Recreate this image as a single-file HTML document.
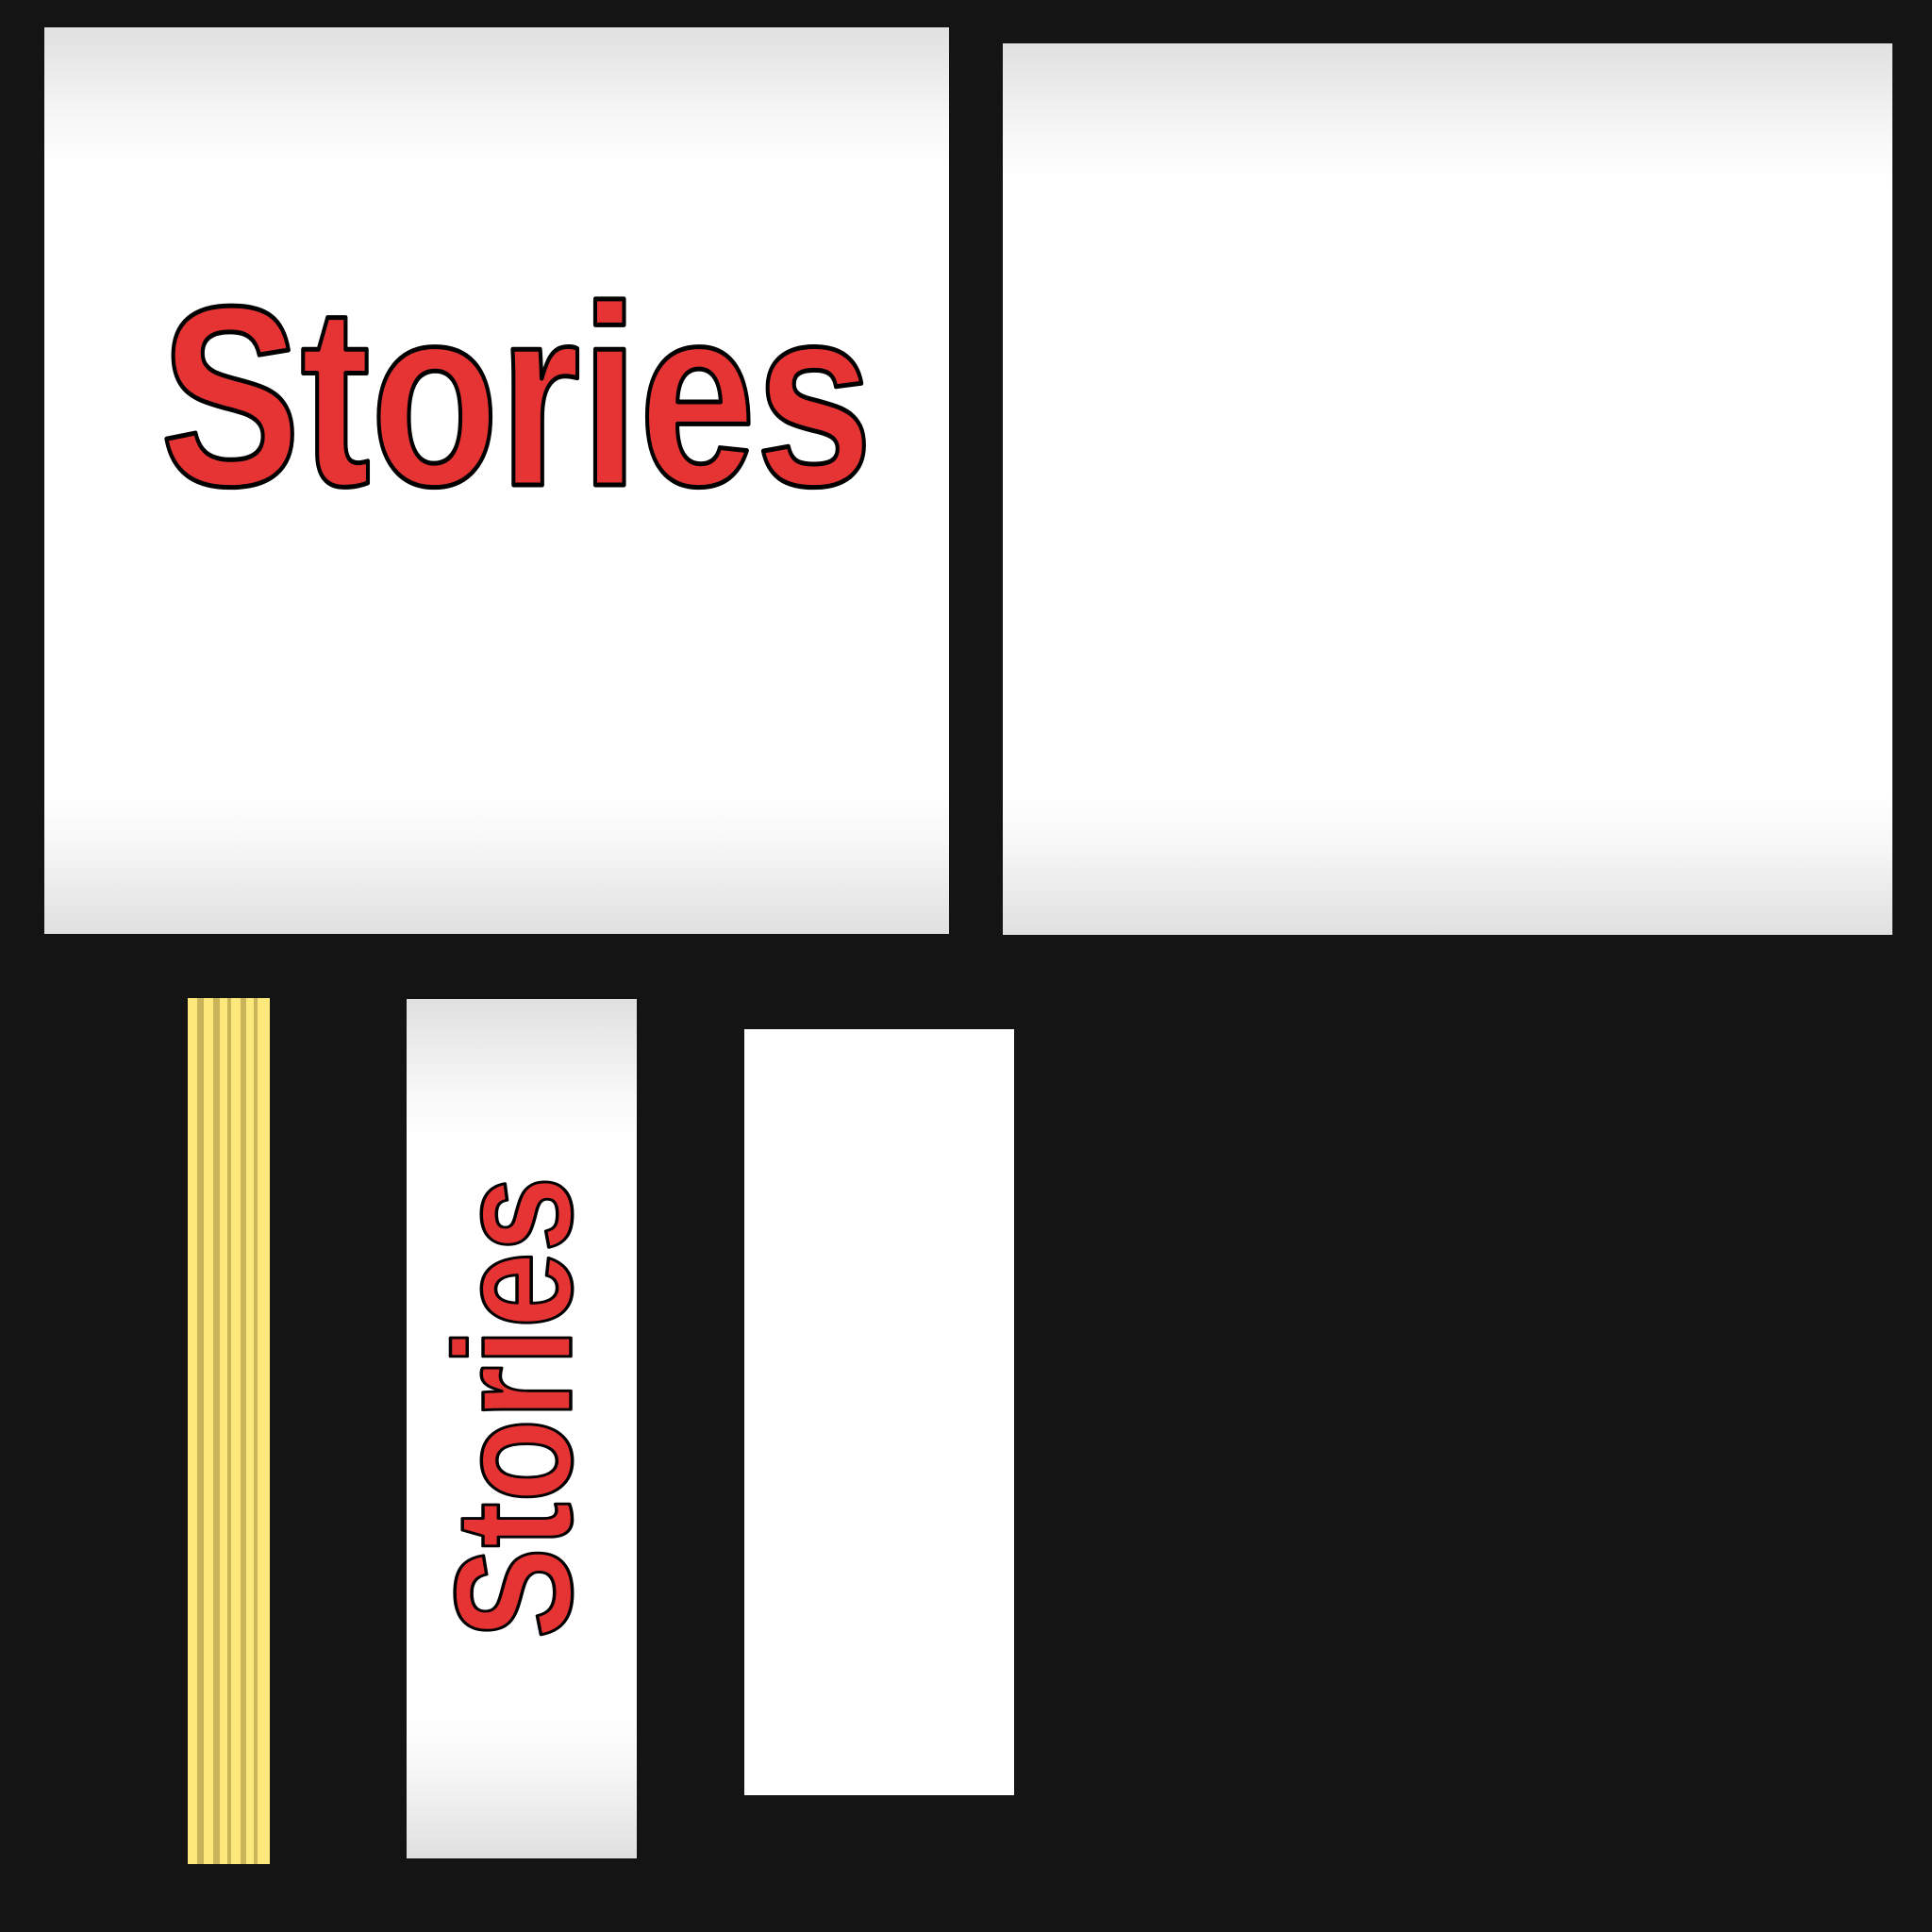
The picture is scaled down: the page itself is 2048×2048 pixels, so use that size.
<!DOCTYPE html>
<html><head><style>
html,body{margin:0;padding:0;background:#141414;width:2048px;height:2048px;overflow:hidden}
.p{position:absolute;background:linear-gradient(to bottom,#e0e0e0 0px,#f8f8f8 100px,#fff 150px,#fff calc(100% - 150px),#f8f8f8 calc(100% - 100px),#e0e0e0 100%)}
svg{position:absolute;left:0;top:0}
</style></head><body>
<div class="p" style="left:47px;top:29px;width:959px;height:961px"></div>
<div class="p" style="left:1063px;top:46px;width:943px;height:945px"></div>
<div style="position:absolute;left:199px;top:1058px;width:87px;height:918px;background:#fde87c"></div>
<div style="position:absolute;left:209px;top:1058px;width:7px;height:918px;background:#c9b45a"></div>
<div style="position:absolute;left:226px;top:1058px;width:7px;height:918px;background:#c9b45a"></div>
<div style="position:absolute;left:241px;top:1058px;width:4px;height:918px;background:#c9b45a"></div>
<div style="position:absolute;left:255px;top:1058px;width:6px;height:918px;background:#c9b45a"></div>
<div style="position:absolute;left:269px;top:1058px;width:4px;height:918px;background:#c9b45a"></div>
<div class="p" style="left:431px;top:1059px;width:244px;height:911px"></div>
<div style="position:absolute;left:789px;top:1091px;width:286px;height:812px;background:#fff"></div>
<svg width="2048" height="2048">
<text x="170" y="514" font-family="Liberation Sans, sans-serif" font-weight="bold" font-size="272" textLength="755" lengthAdjust="spacingAndGlyphs" fill="#e63434" stroke="#000" stroke-width="5" stroke-linejoin="round">Stories</text>
<text transform="translate(605,1737) rotate(-90)" x="0" y="0" font-family="Liberation Sans, sans-serif" font-weight="bold" font-size="176" textLength="490" lengthAdjust="spacingAndGlyphs" fill="#e63434" stroke="#000" stroke-width="3.5" stroke-linejoin="round">Stories</text>
</svg>
</body></html>
